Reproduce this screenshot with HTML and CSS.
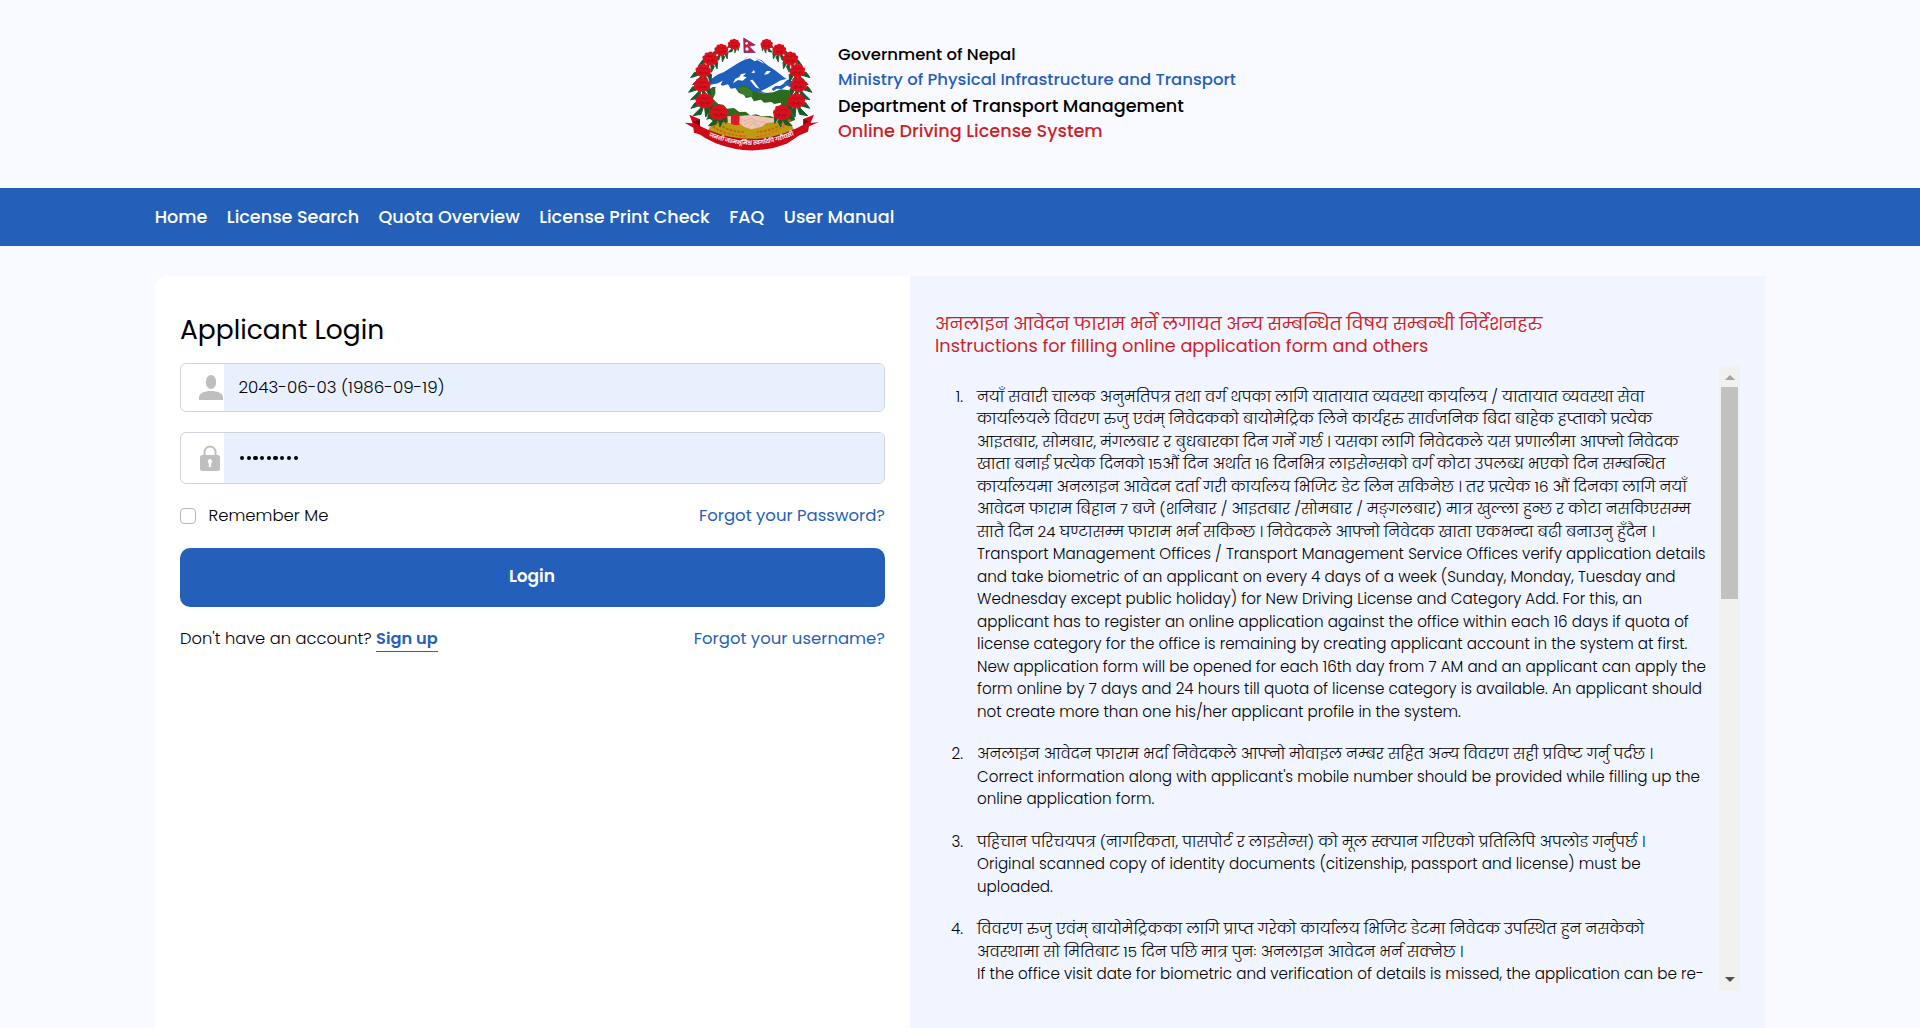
FILE: index.html
```html
<!DOCTYPE html>
<html lang="ne">
<head>
<meta charset="utf-8">
<title>Online Driving License System</title>
<link rel="stylesheet" href="styles.css">
</head>
<body>
<header class="masthead">
  <svg class="emblem" viewBox="72 48 405 345" aria-hidden="true">
    <defs>
      <g id="leaves">
        <path d="M0 10 L-40 22 L-28 5 Z M0 10 L-34 44 L-10 40 Z M0 10 L4 48 L14 28 Z M6 4 L24 36 L26 12 Z" fill="#17592c" stroke="#17592c" stroke-width="3"/>
      </g>
      <g id="flower">
        <path d="M-22 2 Q-27 -8 -17 -10 Q-17 -20 -7 -18 Q0 -25 8 -18 Q19 -19 18 -9 Q27 -4 22 5 Q23 16 12 15 Q7 23 -1 18 Q-11 22 -14 13 Q-25 14 -22 2Z" fill="#dc101c"/>
        <path d="M-14 -5 Q-7 -13 0 -5 Q8 -13 14 -4 M-15 7 Q-7 0 0 8 Q8 0 16 7 M-8 13 L-4 3 M9 12 L6 2" fill="none" stroke="#a30d18" stroke-width="2.4"/>
      </g>
      <g id="branch">
        <use href="#leaves" transform="translate(222 73) scale(.55)"/>
        <use href="#leaves" transform="translate(184 90) scale(.75)"/>
        <use href="#leaves" transform="translate(151 116) scale(.85)"/>
        <use href="#leaves" transform="translate(130 152) scale(.95)"/>
        <use href="#leaves" transform="translate(126 195)"/>
        <use href="#leaves" transform="translate(133 243)"/>
        <use href="#leaves" transform="translate(176 278) scale(.9)"/>
        <use href="#flower" transform="translate(222 73) scale(.78)"/>
        <use href="#flower" transform="translate(184 90) scale(.88)"/>
        <use href="#flower" transform="translate(151 116)"/>
        <use href="#flower" transform="translate(130 152)"/>
        <use href="#flower" transform="translate(126 195) scale(1.08)"/>
        <use href="#flower" transform="translate(133 243) scale(1.14)"/>
        <use href="#flower" transform="translate(176 278) scale(1.14)"/>
      </g>
      <path id="motto" d="M145 348 Q275 403 404 344"/>
    </defs>
    <path d="M145 183 L172 164 L192 156 L236 128 L252 120 L262 111 L276 111 L305 121 L322 136 L345 151 L376 175 L396 183 V218 H145Z" fill="#1f5fbc"/>
    <path d="M252 120 L264 110 L279 111 L304 123 L312 132 L292 120 L284 124 L270 115Z M219 190 L226 176 L238 171 L243 162 L258 160 L249 169 L260 172 L248 182 L234 180Z M270 181 L278 179 L299 207 L287 202Z M274 159 L282 150 L285 158Z M312 164 L320 153 L333 153 L324 162Z M145 196 L174 190 L188 182 L182 195 L160 203 L145 210Z M302 213 L320 205 L347 190 L359 182 L389 174 L370 190 L394 204 L388 214 L345 220 L320 219Z" fill="#fff"/>
    <path d="M335 207 L346 198 L360 198 L370 191 L384 194 L366 207 L350 206 L340 213Z" fill="#1f5fbc"/>
    <path d="M145 212 L158 201 H170 L230 212 L240 200 L254 196 L268 203 L279 214 L310 220 L340 217 L362 208 L388 211 L405 300 L350 322 H180 L142 290Z" fill="#2d691e"/>
    <path d="M232 205 Q252 193 276 212 L278 232 L247 225Z" fill="#3a7d2c"/>
    <path d="M144 335 Q149 308 182 307 H374 Q399 312 402 333 Q280 391 144 335Z" fill="#bb9c11"/>
    <path d="M166 203 L175 192 L188 197 L204 193 L212 206 L226 204 L237 219 L252 225 L258 234 L274 231 L282 244 L303 239 L312 248 L334 246 L343 252 L363 248 L365 291 L342 293 L331 288 L305 289 L288 283 L270 286 L257 275 L238 276 L222 264 L201 266 L190 254 L175 252 L159 237 L166 220Z" fill="#fff"/>
    <g fill="none" stroke="#c5680b" stroke-width="6" stroke-dasharray="8 4">
      <path d="M150 312 Q185 344 258 348 M169 304 Q195 334 252 336 M390 299 Q360 340 285 350 M372 305 Q344 332 292 336"/>
    </g>
    <g fill="none" stroke="#e88c20" stroke-width="2.5"><path d="M151 306 Q190 345 260 345 M389 305 Q350 345 286 347"/></g>
    <path d="M202 289 L245 287 L273 285 L309 290 L360 297 L350 307 L319 309 L306 320 L274 328 L253 321 L240 311 L204 309Z" fill="#f0c5b6"/>
    <path d="M250 304 L273 295 L288 302 L315 308 M253 314 L277 302 L301 320 M262 323 L281 308 L292 325" fill="none" stroke="#d0a193" stroke-width="1.6"/>
    <path d="M213 287 Q226 279 239 286 L238 314 Q225 318 213 311Z" fill="#df1824"/>
    <use href="#branch"/>
    <use href="#branch" transform="translate(542 0) scale(-1 1)"/>
    <path d="M88 284 L120 298 V320 L148 334 L143 351 L102 338 L100 323 L74 308 L98 310Z M462 284 L430 297 V317 L401 333 L405 351 L444 335 L447 319 L476 307 L452 309Z" fill="#cf0816"/>
    <path d="M98 306 L120 298 V321Z M449 306 L430 297 V318Z" fill="#790711"/>
    <path d="M98 306 Q272 408 450 304 L438 331 Q407 355 380 371 Q276 412 167 370 Q135 357 110 337Z" fill="#cd0b18"/>
    <path d="M150 333 Q276 389 402 330" fill="none" stroke="#920a12" stroke-width="2"/>
    <text class="motto"><textPath href="#motto" startOffset="1" textLength="264">जननी जन्मभूमिश्च स्वर्गादपि गरीयसी</textPath></text>
    <path d="M251 54 L286 75 L267 79 L286 98 H252Z" fill="#d91443" stroke="#29408b" stroke-width="2"/>
    <circle cx="260" cy="70" r="4" fill="#fff"/><circle cx="261" cy="87" r="5" fill="#fff"/>
  </svg>
  <div class="titles">
    <p>Government of Nepal</p>
    <p class="blue">Ministry of Physical Infrastructure and Transport</p>
    <p class="large">Department of Transport Management</p>
    <p class="large red">Online Driving License System</p>
  </div>
</header>
<nav class="menu">
  <a>Home</a>
  <a>License Search</a>
  <a>Quota Overview</a>
  <a>License Print Check</a>
  <a>FAQ</a>
  <a>User Manual</a>
</nav>
<main class="card">
  <form class="login">
    <h1>Applicant Login</h1>
    <div class="field">
      <div class="icon"><svg class="user" viewBox="0 0 24 25"><ellipse cx="12" cy="7" rx="5.2" ry="7"/><path d="M0 25v-2.5C0 18 6 16 12 16s12 2 12 6.500V25Z"/></svg></div>
      <div class="value">2043-06-03 (1986-09-19)</div>
    </div>
    <div class="field password">
      <div class="icon"><svg class="lock" viewBox="0 0 20 26"><path d="M4.500 12V7a5.500 5.500 0 0 1 11 0v5" fill="none" stroke="#bfbfbf" stroke-width="2"/><rect y="10" width="20" height="16" rx="2.500"/><path d="M10 14a2.300 2.300 0 0 1 1.200 4.200V21a1.200 1.200 0 0 1-2.400 0v-2.800A2.300 2.300 0 0 1 10 14Z" fill="#fff"/></svg></div>
      <div class="value dots"><i></i><i></i><i></i><i></i><i></i><i></i><i></i><i></i><i></i></div>
    </div>
    <div class="row options">
      <label><b class="box"></b>Remember Me</label>
      <a>Forgot your Password?</a>
    </div>
    <button type="button">Login</button>
    <div class="row">
      <div class="signup">Don't have an account? <a class="join">Sign up</a></div>
      <a>Forgot your username?</a>
    </div>
  </form>
  <section class="guide">
    <h2>अनलाइन आवेदन फाराम भर्ने लगायत अन्य सम्बन्धित विषय सम्बन्धी निर्देशनहरु</h2>
    <h2 class="english">Instructions for filling online application form and others</h2>
    <div class="scroller">
      <ol>
        <li><div><p class="ne">नयाँ सवारी चालक अनुमतिपत्र तथा वर्ग थपका लागि यातायात व्यवस्था कार्यालय / यातायात व्यवस्था सेवा<br>
          कार्यालयले विवरण रुजु एवंम् निवेदकको बायोमेट्रिक लिने कार्यहरु सार्वजनिक बिदा बाहेक हप्ताको प्रत्येक<br>
          आइतबार, सोमबार, मंगलबार र बुधबारका दिन गर्ने गर्छ । यसका लागि निवेदकले यस प्रणालीमा आफ्नो निवेदक<br>
          खाता बनाई प्रत्येक दिनको 15औं दिन अर्थात 16 दिनभित्र लाइसेन्सको वर्ग कोटा उपलब्ध भएको दिन सम्बन्धित<br>
          कार्यालयमा अनलाइन आवेदन दर्ता गरी कार्यालय भिजिट डेट लिन सकिनेछ । तर प्रत्येक 16 औं दिनका लागि नयाँ<br>
          आवेदन फाराम बिहान 7 बजे (शनिबार / आइतबार /सोमबार / मङ्गलबार) मात्र खुल्ला हुन्छ र कोटा नसकिएसम्म<br>
          सातै दिन 24 घण्टासम्म फाराम भर्न सकिन्छ । निवेदकले आफ्नो निवेदक खाता एकभन्दा बढी बनाउनु हुँदैन ।</p>
          <p>Transport Management Offices / Transport Management Service Offices verify application details<br>
          and take biometric of an applicant on every 4 days of a week (Sunday, Monday, Tuesday and<br>
          Wednesday except public holiday) for New Driving License and Category Add. For this, an<br>
          applicant has to register an online application against the office within each 16 days if quota of<br>
          license category for the office is remaining by creating applicant account in the system at first.<br>
          New application form will be opened for each 16th day from 7 AM and an applicant can apply the<br>
          form online by 7 days and 24 hours till quota of license category is available. An applicant should<br>
          not create more than one his/her applicant profile in the system.</p></div></li>
        <li><div><p class="ne">अनलाइन आवेदन फाराम भर्दा निवेदकले आफ्नो मोवाइल नम्बर सहित अन्य विवरण सही प्रविष्ट गर्नु पर्दछ ।</p>
          <p>Correct information along with applicant's mobile number should be provided while filling up the<br>
          online application form.</p></div></li>
        <li><div><p class="ne">पहिचान परिचयपत्र (नागरिकता, पासपोर्ट र लाइसेन्स) को मूल स्क्यान गरिएको प्रतिलिपि अपलोड गर्नुपर्छ ।</p>
          <p>Original scanned copy of identity documents (citizenship, passport and license) must be<br>
          uploaded.</p></div></li>
        <li><div><p class="ne">विवरण रुजु एवंम् बायोमेट्रिकका लागि प्राप्त गरेको कार्यालय भिजिट डेटमा निवेदक उपस्थित हुन नसकेको<br>
          अवस्थामा सो मितिबाट 15 दिन पछि मात्र पुनः अनलाइन आवेदन भर्न सक्नेछ ।</p>
          <p>If the office visit date for biometric and verification of details is missed, the application can be re-</p></div></li>
      </ol>
      <div class="bar"><i class="up"></i><i class="thumb"></i><i class="down"></i></div>
    </div>
  </section>
</main>
</body>
</html>
```
FILE: styles.css
```css
* { box-sizing: border-box; margin: 0; padding: 0; }
body {
  height: 1028px;
  overflow: hidden;
  background: #f9faff;
  color: #000;
  font: 300 16.5px/24px Poppins, Inter, "Noto Sans", sans-serif;
  white-space: nowrap;
}
.masthead { display: flex; height: 188px; padding: 36px 0 0 684px; }
.emblem { width: 135px; height: 115px; }
.motto { font-size: 17px; font-weight: 600; fill: #fff; }
.titles { margin: 5.500px 0 0 19px; font-weight: 500; }
.titles p { height: 25.500px; line-height: 25.500px; }
.titles .large { font-size: 17.650px; }
.titles .large.red { line-height: 26.500px; }
.blue { color: #265fb9; }
.red { color: #cc1f28; }
.menu {
  display: flex;
  gap: 19.400px;
  height: 58px;
  padding-left: 154.700px;
  background: #245fb9;
  color: #fff;
  font-size: 17.600px;
  font-weight: 500;
  line-height: 58px;
}
.card { display: flex; width: 1610px; height: 790px; margin: 30px 0 0 155px; }
.login { width: 755px; padding: 34px 25px 0; border-radius: 12px 0 0; background: #fff; }
h1 { height: 53px; font-size: 26.500px; font-weight: 400; line-height: 40px; }
.field {
  display: flex;
  height: 49px;
  overflow: hidden;
  border: 1px solid #ced4da;
  border-radius: 6px;
}
.password { height: 52px; margin-top: 20px; }
.icon { width: 43px; padding: 11px 0 0 18px; }
.icon svg { display: block; fill: #bfbfbf; }
.user { width: 24px; height: 25px; }
.password .icon { padding: 12px 0 0 19px; }
.lock { width: 20px; height: 26px; }
.value { flex: 1; padding: 11px 0 0 14.500px; background: #e8f0fe; font-size: 16.700px; }
.dots { display: flex; gap: 2.400px; padding: 22.500px 0 0 16px; }
.dots i { width: 4.300px; height: 4.300px; border-radius: 50%; background: #000; }
.row { display: flex; justify-content: space-between; }
.row a { color: #265fb9; font-weight: 400; }
.options { margin-top: 20px; height: 44px; }
.options label { display: flex; gap: 12.500px; }
.box { width: 16px; height: 16px; margin-top: 4px; border: 1px solid #b7b7b7; border-radius: 4px; }
button {
  display: block;
  width: 100%;
  height: 59px;
  margin-bottom: 20px;
  padding: 0 1px 3px 0;
  border: 0;
  border-radius: 10px;
  background: #245fb9;
  color: #fff;
  font: inherit;
  font-size: 17px;
  font-weight: 600;
}
.signup { font-size: 16.300px; }
.row .join { padding-bottom: 1px; border-bottom: 1px solid #265fb9; font-size: 16.200px; font-weight: 600; }
.guide { width: 855px; padding: 38px 25px 0; background: #f0f5ff; }
h2 { height: 21.600px; color: #cc1f28; font-size: 17.600px; font-weight: 400; line-height: 21.600px; }
.english { font-size: 17.700px; line-height: 20px; }
.scroller { display: flex; justify-content: space-between; height: 625px; margin-top: 8.800px; overflow: hidden; }
ol { padding-top: 19.750px; font-size: 15.150px; line-height: 22.500px; list-style: none; counter-reset: item; }
.ne { font-size: 15.080px; }
li { display: flex; gap: 14px; margin-bottom: 20px; counter-increment: item; }
li::before { content: counter(item) "."; width: 28px; text-align: right; }
.bar { display: flex; flex-direction: column; align-items: center; width: 21px; background: #f1f1f1; }
.up { border: 5px solid transparent; border-top: 0; border-bottom-color: #a3a3a3; margin: 9px 0 7px; }
.thumb { width: 17px; height: 212px; background: #c1c1c1; }
.down { border: 5px solid transparent; border-bottom: 0; border-top-color: #505050; margin: auto 0 9px; }
```
